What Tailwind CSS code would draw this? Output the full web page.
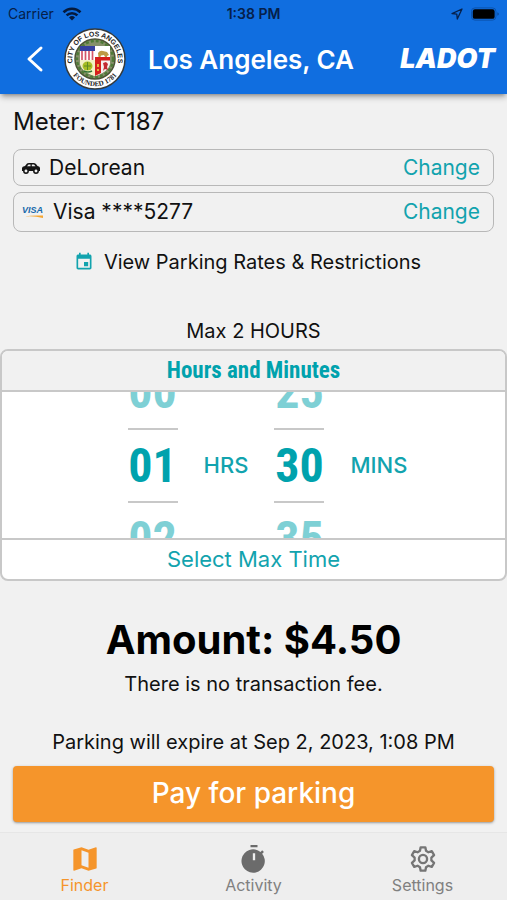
<!DOCTYPE html>
<html lang="en">

<head>
   <meta charset="UTF-8">
   <meta name="viewport" content="width=device-width, initial-scale=1.0">
   <title>Pay for parking - Los Angeles, CA</title>
   <script src="https://cdn.jsdelivr.net/npm/@tailwindcss/browser@4"></script>
</head>

<body class="flex min-h-screen flex-col bg-[#f1f1f1] font-['Inter','Liberation_Sans',sans-serif] text-[#111]">
   <!-- Header -->
   <header class="bg-[#106ee0] pb-1 shadow-md shadow-black/30">
      <div class="grid h-7 grid-cols-3 items-center px-2 text-sm text-[#06204a]">
         <div class="flex items-center gap-2">
            <span>Carrier</span>
            <svg class="h-4 w-5" viewBox="0 0 20 16" fill="none" stroke="#051a3d" stroke-width="2.6">
               <path d="M1.5 6.2a12.2 12.2 0 0 1 17 0M4.6 9.4a7.8 7.8 0 0 1 10.8 0" />
               <path d="M10 14.6 7 11.5a4.4 4.4 0 0 1 6 0z" fill="#051a3d" stroke="none" />
            </svg>
         </div>
         <span class="text-center font-semibold">1:38 PM</span>
         <div class="flex items-center justify-end gap-2">
            <svg class="size-3" viewBox="0 0 12 12" fill="none" stroke="#06204a" stroke-width="1.3" stroke-linejoin="round">
               <path d="M11 1 1 5.6l4.8.6L6.3 11z" />
            </svg>
            <svg class="h-4 w-7" viewBox="0 0 32 16">
               <rect x=".5" y="1" width="28" height="14" rx="4" fill="none" stroke="#0a4fa6" />
               <rect x="2" y="2.5" width="25" height="11" rx="2.5" fill="#000" />
               <path d="M30 6v4q2-.5 2-2t-2-2" fill="#0a4fa6" />
            </svg>
         </div>
      </div>
      <div class="flex items-center pr-3 pl-6">
         <button aria-label="Back" class="mr-5">
            <svg class="h-8 w-5" viewBox="0 0 20 32" fill="none" stroke="#fff" stroke-width="3" stroke-linecap="round"
               stroke-linejoin="round">
               <path d="M17 5 5 16l12 11" />
            </svg>
         </button>
         <!-- City seal -->
         <svg class="size-[62px] shrink-0" viewBox="0 0 62 62">
            <defs>
               <path id="seal-top" d="M10.2 40.5a22.8 22.8 0 1 1 41.6 0" />
               <path id="seal-bottom" d="M4.5 38a27.5 27.5 0 0 0 53 0" />
            </defs>
            <circle cx="31" cy="31" r="30" fill="#fff" stroke="#343a3c" stroke-width="1.5" />
            <circle cx="31" cy="31" r="20" fill="#86906a" stroke="#4c5236" stroke-width="1.5" />
            <circle cx="31" cy="31" r="18" fill="none" stroke="#4f7a37" stroke-width="2.5" stroke-dasharray="3 2" />
            <path d="M16 18h30v16q0 9-15 14-15-5-15-14z" fill="#fff" />
            <path d="M18 20v13M21.5 20v13M25 20v13M28.5 20v13" stroke="#d5566b" stroke-width="1.7" />
            <path d="M16 18h15v5H16z" fill="#3540a0" />
            <path d="M16 32h15v16q-15-5-15-14z" fill="#f3f1c4" />
            <path d="M34 25q2-3 5-2l4 1 2 3-2 1v1h-2l-1-2-3 .5-.5 1.5h-2z" fill="#bd9a46" />
            <path d="M31 31h15v3q0 9-15 14z" fill="#f4f0ee" />
            <path d="M31 29h15v3.5H37V45l-6 3z" fill="#d6201d" />
            <path d="M33 36h2v3h-2zM33 41h2v2h-2z" fill="#e4b23e" />
            <path d="m39 35 3-1 2 2-1 3 1 3-3-1-2 2 1-4z" fill="#c32831" />
            <ellipse cx="23.5" cy="38" rx="5" ry="4.5" fill="#a8bd25" />
            <path d="M20 38h7M23.5 34v8" stroke="#5e8c20" />
            <path d="M20 43q4 2 8 0" fill="none" stroke="#327334" stroke-width="1.5" />
            <text class="font-['Liberation_Sans',sans-serif] text-[7px] font-bold" fill="#222" text-anchor="middle">
               <textPath href="#seal-top" startOffset="50%">CITY OF LOS ANGELES</textPath>
            </text>
            <text class="font-['Liberation_Serif',serif] text-[7px] font-bold" fill="#222" text-anchor="middle">
               <textPath href="#seal-bottom" startOffset="50%">FOUNDED 1781</textPath>
            </text>
         </svg>
         <h1 class="ml-[22px] flex-1 text-[26px] font-semibold whitespace-nowrap text-white">Los Angeles, CA</h1>
         <span class="text-[27px] font-black text-white italic">LADOT</span>
      </div>
   </header>

   <main class="flex flex-1 flex-col">
      <!-- Meter, vehicle and card -->
      <section class="px-[13px] pt-2">
         <h2 class="h-10 text-2xl leading-10">Meter: CT187</h2>
         <div class="mt-[7px] flex h-[37px] items-center rounded-lg border border-[#b8b8b8] px-[7px] text-[21px]">
            <svg class="mr-2 h-4 w-5" viewBox="0 0 20 16">
               <path d="M1 8q0-1.5 3-2l2-2.5Q6.5 3 8 3h4.5q1.5 0 2.5 1l1.5 2q2.5.5 2.5 2v3H1z" fill="#151515" />
               <path d="M6 6.2 7.5 4.5h2v1.7zM10.8 4.5H13l1.5 1.7h-3.7z" fill="#f1f1f1" />
               <circle cx="5" cy="11" r="2.2" fill="#f1f1f1" stroke="#151515" stroke-width="1.5" />
               <circle cx="15" cy="11" r="2.2" fill="#f1f1f1" stroke="#151515" stroke-width="1.5" />
            </svg>
            <span class="flex-1">DeLorean</span>
            <button class="px-[6px] text-[#12a3ae]">Change</button>
         </div>
         <div class="mt-[6px] flex h-10 items-center rounded-lg border border-[#b8b8b8] px-[7px] text-[21px]">
            <svg class="mr-2 h-4 w-6" viewBox="0 0 24 16">
               <text class="font-['Liberation_Sans',sans-serif] text-[9px] font-bold italic" x="1" y="9" fill="#1769aa">VISA</text>
               <path d="M3 12.5q8-1.5 19-1v2.5q-9-2.5-19-1.5" fill="#f5a631" />
            </svg>
            <span class="flex-1">Visa ****5277</span>
            <button class="px-[6px] text-[#12a3ae]">Change</button>
         </div>
      </section>

      <a href="#" class="mt-[14px] flex h-8 items-center justify-center gap-[10px] pr-3 text-xl">
         <svg class="size-5" viewBox="0 0 24 24" fill="#12a3ae">
            <path
               d="M17 12h-5v5h5v-5zM16 1v2H8V1H6v2H5c-1.1 0-2 .9-2 2v14c0 1.1.9 2 2 2h14c1.1 0 2-.9 2-2V5c0-1.1-.9-2-2-2h-1V1h-2zm3 18H5V8h14v11z" />
         </svg>
         View Parking Rates &amp; Restrictions
      </a>

      <!-- Time picker -->
      <p class="mt-[37px] h-8 text-center text-xl leading-8">Max 2 HOURS</p>
      <section class="mt-[2px] rounded-lg border-2 border-[#c8c8c8] bg-white text-center">
         <h3
            class="h-[41px] rounded-t-md border-b-2 border-[#c8c8c8] bg-[#f1f1f1] font-['Roboto_Condensed',Roboto,sans-serif] text-[23px] leading-10 font-bold text-[#00a2ad]">
            Hours and Minutes</h3>
         <div class="flex h-[146px] items-center justify-center gap-[26px] overflow-hidden pl-7 text-[22px] font-medium text-[#12a3ae]">
            <ul class="w-[50px] font-['Roboto_Condensed',Roboto,sans-serif] text-5xl leading-[72px] font-bold text-[#00a2ad]">
               <li class="h-[72px] opacity-50">00</li>
               <li class="h-[75px] border-y-2 border-[#c8c8c8]">01</li>
               <li class="h-[72px] opacity-50">02</li>
            </ul>
            <span>HRS</span>
            <ul class="w-[50px] font-['Roboto_Condensed',Roboto,sans-serif] text-5xl leading-[72px] font-bold text-[#00a2ad]">
               <li class="h-[72px] opacity-50">25</li>
               <li class="h-[75px] border-y-2 border-[#c8c8c8]">30</li>
               <li class="h-[72px] opacity-50">35</li>
            </ul>
            <span>MINS</span>
         </div>
         <button class="h-[41px] w-full border-t-2 border-[#c8c8c8] text-[22px] text-[#12a3ae]">Select Max Time</button>
      </section>

      <!-- Total and payment -->
      <section class="px-[13px] pt-[34px] pb-[10px] text-center text-xl">
         <p class="text-[40px] leading-[50px] font-bold text-black">Amount: $4.50</p>
         <p class="mt-[3px] leading-8">There is no transaction fee.</p>
         <p class="mt-[26px] leading-8">Parking will expire at Sep 2, 2023, 1:08 PM</p>
         <button class="mt-2 h-14 w-full rounded bg-[#f5952b] text-[28px] font-medium text-white shadow-sm shadow-black/30">Pay for
            parking</button>
      </section>
   </main>

   <!-- Tab bar -->
   <nav class="grid h-[68px] grid-cols-3 border-t border-[#e6e6e6] bg-[#eee] pt-3 text-base text-[#808080]">
      <a href="#" class="flex flex-col items-center text-[#f5952b]">
         <svg class="h-7 w-8" viewBox="0 0 24 24" fill="currentColor">
            <path
               d="M21.5 2l-.16.03L15 4.1 9 2 2.36 3.9c-.21.07-.36.25-.36.48V21.5c0 .28.22.5.5.5l.16-.03L9 19.9l6 2.1 6.64-1.9c.21-.07.36-.25.36-.48V2.5c0-.28-.22-.5-.5-.5zM15 19.5l-6-2.11V4.5l6 2.11V19.5z" />
         </svg>
         Finder
      </a>
      <a href="#" class="flex flex-col items-center">
         <svg class="size-7" viewBox="0 0 24 24" fill="#6b6b6b">
            <path
               d="M9 0h6v2H9zM19 7.4 20.5 6 19 4.5 17.6 6A10 10 0 1 0 19 7.4zM13 13h-2V7h2z" />
         </svg>
         Activity
      </a>
      <a href="#" class="flex flex-col items-center">
         <svg class="size-7" viewBox="0 0 24 24" fill="none" stroke="#757575" stroke-width="2" stroke-linejoin="round">
            <path
               d="M10 2h4l.6 3 2 1.2 2.9-1 2 3.5L19.2 10.8v2.4l2.3 2.1-2 3.5-2.9-1-2 1.2-.6 3h-4l-.6-3-2-1.2-2.9 1-2-3.5 2.3-2.1v-2.4L2.5 8.7l2-3.5 2.9 1 2-1.2z" />
            <circle cx="12" cy="12" r="3.5" />
         </svg>
         Settings
      </a>
   </nav>
</body>

</html>
